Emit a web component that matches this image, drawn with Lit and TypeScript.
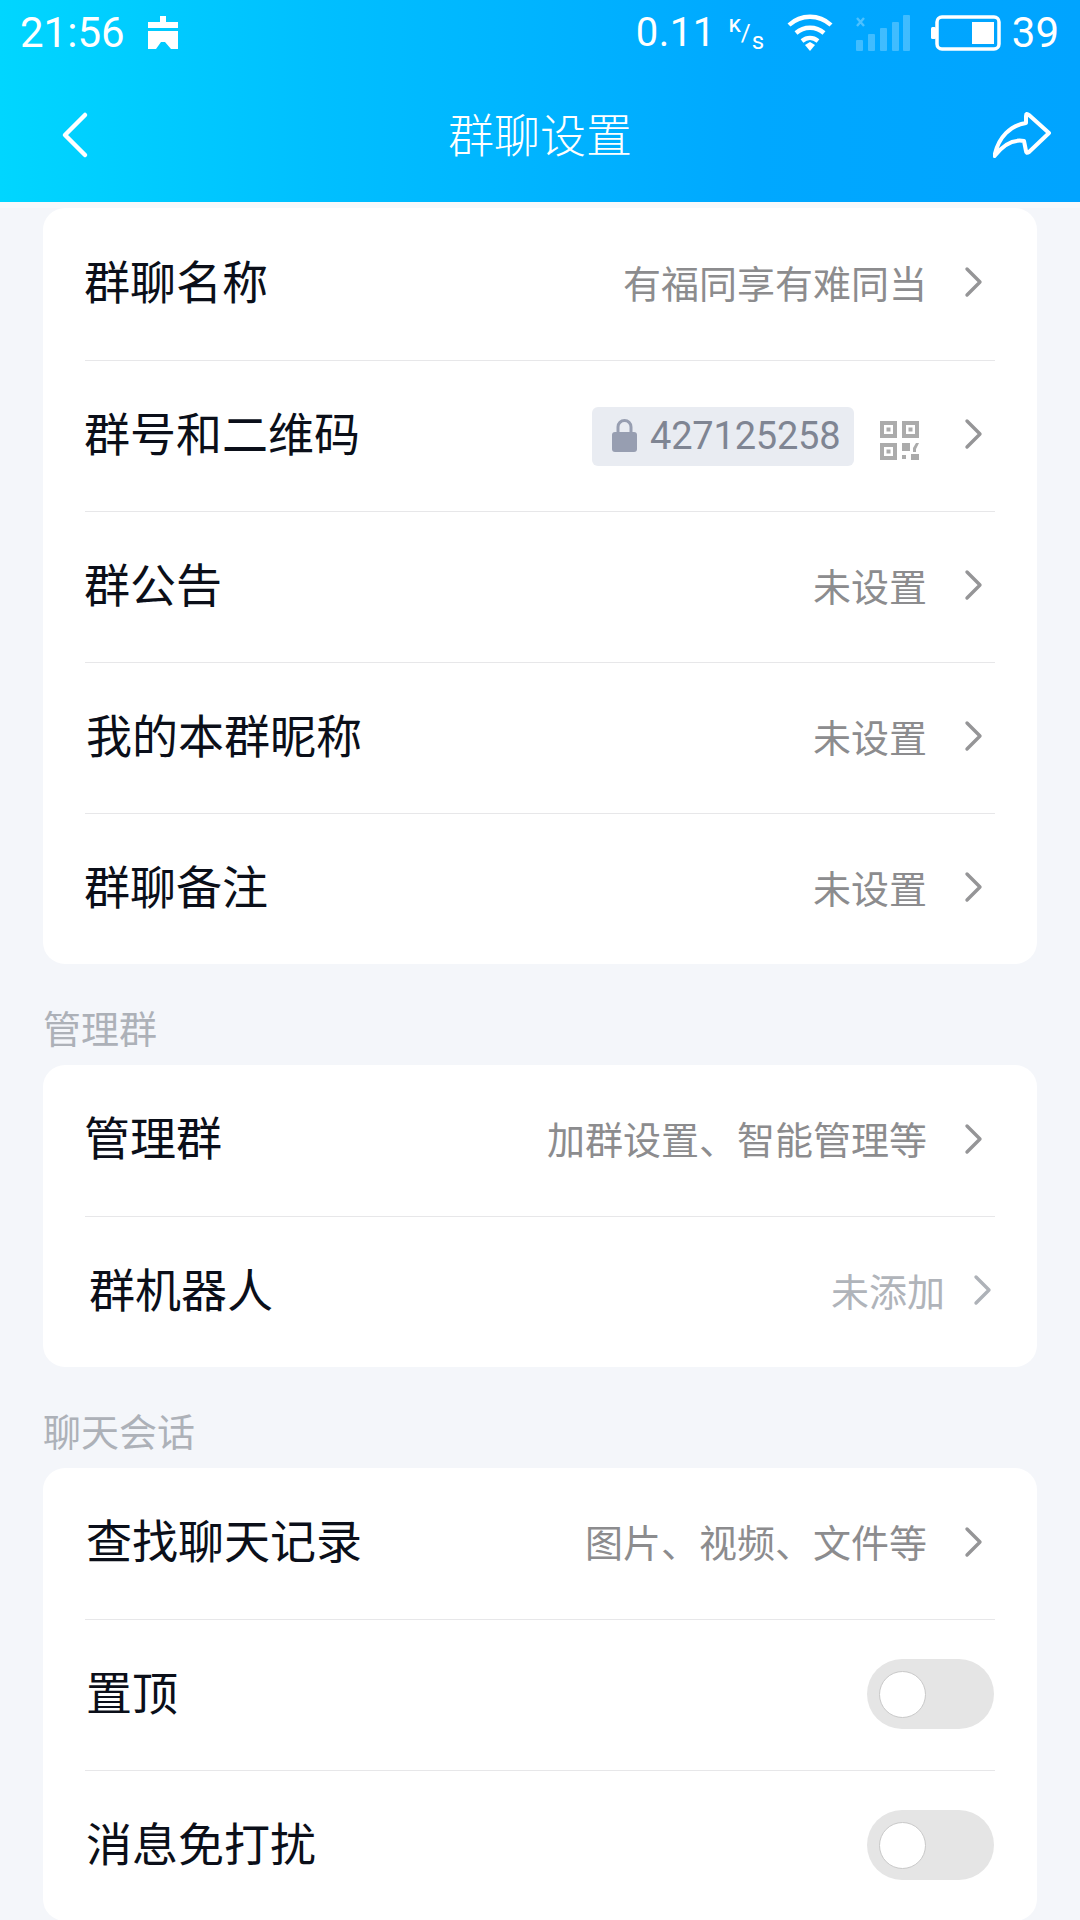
import { LitElement, html, css } from "lit";
import { customElement } from "lit/decorators.js";

const chevron = html`<svg class="chev" viewBox="0 0 20 32"><path d="M3 3 L16 16 L3 29" fill="none" stroke="currentColor" stroke-width="3.4" stroke-linecap="round" stroke-linejoin="round"/></svg>`;

@customElement("app-root")
export class AppRoot extends LitElement {
  static styles = css`
    :host { display: block; width: 1080px; height: 1920px; overflow: hidden; background: #f4f6fa;
      font-family: Roboto, "Noto Sans CJK SC", sans-serif; color: #0b0f19; }
    * { box-sizing: border-box; }
    .header { height: 202px; background: linear-gradient(90deg, #00d6ff 0%, #00bfff 30%, #00a8ff 70%, #00a4ff 100%); color: #fff; display: flex; flex-direction: column; }
    .status { height: 65px; padding: 0 21px 0 20px; display: flex; align-items: center; font-size: 42px; }
    .spacer { flex: 1; }
    .cal { width: 30px; height: 33px; margin-left: 23px; }
    .speed { font-size: 40px; letter-spacing: 0.5px; }
    .unit { display: flex; align-items: flex-start; width: 40px; height: 40px; margin-left: 11px; line-height: 1; }
    .k { font-size: 19px; font-weight: 500; margin: 3px 0 0 2px; }
    .sl { font-size: 24px; margin-top: 8px; }
    .s { font-size: 24px; margin: 16px 0 0 1px; }
    .wifi { width: 46px; height: 38px; margin-left: 20px; }
    .sig { width: 56px; height: 36px; margin-left: 22px; }
    .bat { width: 70px; height: 36px; margin-left: 20px; }
    .batnum { margin-left: 11px; }
    .nav { flex: 1; display: grid; grid-template-columns: 1fr auto 1fr; align-items: center; padding: 2px 28px 0 60px; }
    .back { width: 30px; height: 48px; }
    .title { font-size: 46px; font-weight: 300; line-height: 1; margin: 2px 0 0 -32px; }
    .share { width: 59px; height: 47px; justify-self: end; }
    .gap { height: 6px; background: #f7f9fb; }
    .card { margin: 0 43px; background: #fff; border-radius: 22px; padding: 0 42px; }
    .row { height: 151px; display: flex; align-items: center; border-top: 1.5px solid #e7e7e9; }
    .row:first-child { border-top: none; }
    .first .row:first-child { height: 152px; }
    .name { font-size: 46px; line-height: 1; flex: none; margin: -3px 0 0 -1px; }
    .name.sh2 { margin-left: 1px; }
    .name.sh4 { margin-left: 4px; }
    .val { margin-left: auto; font-size: 38px; line-height: 1; color: #8c8c8e; margin-top: 1px; }
    .val.light { color: #b0b4ba; }
    .chev { width: 20px; height: 32px; color: #959597; margin: -4px 11px 0 37px; flex: none; }
    .qr-chev { margin-left: 45px; }
    .shifted .chev { margin-right: 2px; margin-left: 28px; }
    .light-row .chev { color: #aeb2b8; }
    .badge { margin-left: auto; height: 59px; width: 262px; background: #e9ecf2; border-radius: 6px; display: flex; align-items: center; padding-left: 20px; color: #7f8593; font-size: 38px; letter-spacing: -0.2px; }
    .lock { width: 25px; height: 33px; margin-right: 13px; margin-top: -2px; }
    .qr { width: 39px; height: 39px; margin-left: 26px; margin-top: 8px; }
    .label { height: 101px; display: flex; align-items: flex-end; padding: 0 0 16px 43px; font-size: 38px; line-height: 1; color: #adb1b8; }
    .switch { margin: -2px 1px 0 auto; width: 127px; height: 70px; border-radius: 35px; background: #e5e5e5; display: flex; align-items: center; padding-left: 12px; }
    .knob { width: 47px; height: 47px; border-radius: 50%; background: #fff; border: 1.5px solid #c9c9c9; }
  `;

  private row(name: string, val: string, nameCls = "") {
    return html`<div class="row"><div class="name ${nameCls}">${name}</div><div class="val">${val}</div>${chevron}</div>`;
  }

  render() {
    return html`
      <div class="header">
        <div class="status">
          <span>21:56</span>
          <svg class="cal" viewBox="0 0 30 33"><path fill="#fff" d="M12 0h6v6h12v6H0V6h12zM0 15h30v18h-7l-6-7-4 0-5 7H0z"/></svg>
          <span class="spacer"></span>
          <span class="speed">0.11</span>
          <span class="unit"><span class="k">K</span><span class="sl">/</span><span class="s">s</span></span>
          <svg class="wifi" viewBox="0 0 46 38" fill="none" stroke="#fff" stroke-width="4.4">
            <path d="M2 11 C14 0 32 0 44 11"/><path d="M9 19 C17 12 29 12 37 19"/><path d="M15 27 C20 23 26 23 31 27"/>
            <path d="M18 31 L23 28 L28 31 L23 37 Z" fill="#fff" stroke="none"/>
          </svg>
          <svg class="sig" viewBox="0 0 56 36" fill="#fff" fill-opacity="0.25">
            <rect x="1" y="25" width="7" height="11" rx="1"/><rect x="13" y="19" width="7" height="17" rx="1"/>
            <rect x="25" y="13" width="7" height="23" rx="1"/><rect x="37" y="7" width="7" height="29" rx="1"/><rect x="48" y="0" width="7" height="36" rx="1"/>
            <path d="M2 3 L9 11 M9 3 L2 11" stroke="#fff" stroke-opacity="0.3" stroke-width="2.4"/>
          </svg>
          <svg class="bat" viewBox="0 0 70 36">
            <rect x="0" y="12" width="5" height="12" rx="1.5" fill="#fff"/>
            <rect x="6" y="2" width="62" height="32" rx="5" fill="none" stroke="#fff" stroke-width="3.5"/>
            <rect x="41" y="7" width="22" height="22" fill="#fff"/>
          </svg>
          <span class="batnum">39</span>
        </div>
        <div class="nav">
          <svg class="back" viewBox="0 0 30 48"><path d="M25 4 L5 24 L25 44" fill="none" stroke="#fff" stroke-width="4.5" stroke-linecap="round" stroke-linejoin="round"/></svg>
          <div class="title">群聊设置</div>
          <svg class="share" viewBox="0 0 59 47"><path d="M1.500 45 C5 26 18 14 33 12 L33 5 Q33 1.500 36 4 L56 22 L36 41 Q33 43 33 40 L31 30 C20 28 10 34 1.500 45 Z" fill="none" stroke="#fff" stroke-width="4" stroke-linejoin="round"/></svg>
        </div>
      </div>
      <div class="gap"></div>
      <div class="card first">
        ${this.row("群聊名称", "有福同享有难同当")}
        <div class="row">
          <div class="name">群号和二维码</div>
          <div class="badge">
            <svg class="lock" viewBox="0 0 25 33"><path d="M6 14V8a6.500 6.500 0 0 1 13 0v6" fill="none" stroke="#979eb1" stroke-width="3"/><rect x="0" y="13" width="25" height="20" rx="3" fill="#979eb1"/></svg>
            427125258
          </div>
          <svg class="qr" viewBox="0 0 39 39" fill="#ababab">
            <path fill-rule="evenodd" d="M0 0h17v17H0zM4 4v9h9V4zM22 0h17v17H22zM26 4v9h9V4zM0 22h17v17H0zM4 26v9h9v-9z"/>
            <rect x="6.500" y="6.500" width="4" height="4"/><rect x="28.500" y="6.500" width="4" height="4"/><rect x="6.500" y="28.500" width="4" height="4"/>
            <rect x="22" y="22" width="8" height="8"/><path d="M33 27l3-5h3l-3 6v3h-3z"/><rect x="22" y="34" width="4" height="4"/><rect x="31" y="33" width="8" height="6"/>
          </svg>
          <svg class="chev qr-chev" viewBox="0 0 20 32"><path d="M3 3 L16 16 L3 29" fill="none" stroke="currentColor" stroke-width="3.4" stroke-linecap="round" stroke-linejoin="round"/></svg>
        </div>
        ${this.row("群公告", "未设置")}
        ${this.row("我的本群昵称", "未设置", "sh2")}
        ${this.row("群聊备注", "未设置")}
      </div>
      <div class="label">管理群</div>
      <div class="card">
        ${this.row("管理群", "加群设置、智能管理等")}
        <div class="row shifted light-row"><div class="name sh4">群机器人</div><div class="val light">未添加</div>${chevron}</div>
      </div>
      <div class="label">聊天会话</div>
      <div class="card">
        ${this.row("查找聊天记录", "图片、视频、文件等", "sh2")}
        <div class="row"><div class="name sh2">置顶</div><div class="switch"><div class="knob"></div></div></div>
        <div class="row"><div class="name sh2">消息免打扰</div><div class="switch"><div class="knob"></div></div></div>
      </div>
    `;
  }
}
